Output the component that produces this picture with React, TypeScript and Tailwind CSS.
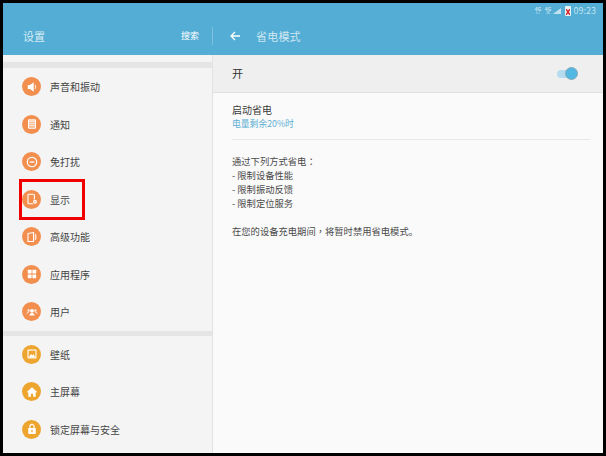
import type { ReactNode } from 'react'

const orange = 'bg-[#f28f4f]'
const amber = 'bg-[#eda52f]'

const icons: Record<string, ReactNode> = {
  sound: (
    <>
      <path d="M2.800 5h2.200L8.700 2.200v9.600L5 9H2.800z" fill="#fff" />
      <path d="M10 4.800c.8 1.200.8 3.200 0 4.400" stroke="#fff" strokeOpacity=".75" strokeWidth="1.100" fill="none" />
    </>
  ),
  notify: (
    <>
      <rect x="3" y="2.200" width="8" height="9.600" rx="1" fill="#fff" />
      <rect x="4" y="4.800" width="6" height="6" fill="#f7b78c" />
      <path d="M4 6.700h6M4 8.700h6" stroke="#fff" strokeWidth=".8" />
      <path d="M5 2.800v1.300M7 2.800v1.300M9 2.800v1.300" stroke="#f28f4f" strokeWidth=".7" />
    </>
  ),
  dnd: (
    <>
      <circle cx="7" cy="7" r="4.700" fill="none" stroke="#fff" strokeWidth="1.200" />
      <path d="M4.600 7h4.800" stroke="#fff" strokeWidth="1.300" />
    </>
  ),
  display: (
    <>
      <rect x="3" y="2.200" width="6.400" height="9.600" rx="1" fill="none" stroke="#fff" strokeWidth="1.100" />
      <circle cx="10" cy="9.800" r="2.600" fill="#f28f4f" />
      <circle cx="10" cy="9.800" r="2" fill="#fff" />
      <circle cx="10" cy="9.800" r=".7" fill="#f28f4f" />
    </>
  ),
  advanced: (
    <>
      <path d="M3 3.500 8.600 2.500v9L3 11.500z" fill="none" stroke="#fff" strokeWidth="1.100" strokeLinejoin="round" />
      <path d="M10.200 4.200c.9.800.9 4.800 0 5.600" stroke="#fff" strokeWidth="1.100" fill="none" />
    </>
  ),
  apps: (
    <>
      <rect x="2.800" y="2.800" width="3.800" height="3.800" rx=".4" fill="#fff" />
      <rect x="7.400" y="2.800" width="3.800" height="3.800" rx=".4" fill="#fff" />
      <rect x="2.800" y="7.400" width="3.800" height="3.800" rx=".4" fill="#fff" />
      <rect x="7.400" y="7.400" width="3.800" height="3.800" rx=".4" fill="#fff" />
    </>
  ),
  users: (
    <>
      <circle cx="7" cy="5.800" r="1.900" fill="#fff" />
      <path d="M4.300 10.600c.3-2 1.500-2.700 2.700-2.700s2.400.7 2.700 2.700z" fill="#fff" />
      <circle cx="3.600" cy="5.500" r="1.200" fill="#fff" fillOpacity=".8" />
      <circle cx="10.400" cy="5.500" r="1.200" fill="#fff" fillOpacity=".8" />
      <path d="M2 8.800c.2-1.200.9-1.800 1.900-1.800M12 8.800c-.2-1.200-.9-1.800-1.900-1.800" stroke="#fff" strokeWidth=".9" fill="none" />
    </>
  ),
  wallpaper: (
    <>
      <rect x="2.500" y="2.500" width="9" height="9" rx=".8" fill="#fff" />
      <rect x="3.600" y="3.600" width="6.800" height="6.800" fill="#eda52f" />
      <path d="M3.600 10.400 6 7l1.300 1.500L8.500 7l1.900 3.400z" fill="#fff" />
    </>
  ),
  home: <path d="M7 2.200 1.600 7.200h1.700v4.500h2.600V8.800h2.200v2.900h2.600V7.200h1.700z" fill="#fff" />,
  lock: (
    <>
      <path d="M4.900 6V4.500a2.100 2.100 0 0 1 4.200 0V6" fill="none" stroke="#fff" strokeWidth="1.100" />
      <rect x="3.200" y="6" width="7.600" height="6" rx=".7" fill="#fff" />
      <rect x="6.400" y="7.800" width="1.200" height="2.400" fill="#eda52f" />
    </>
  ),
}

function SettingItem({ icon, label, color = orange }: { icon: string; label: string; color?: string }) {
  return (
    <div className="flex h-[37.5px] items-center pl-[19px]">
      <div className={`flex h-[19px] w-[19px] items-center justify-center rounded-full ${color}`}>
        <svg viewBox="0 0 14 14" className="h-[14px] w-[14px]">
          {icons[icon]}
        </svg>
      </div>
      <span className="ml-[9px] text-[10px] text-[#444444]">{label}</span>
    </div>
  )
}

function NetBadge({ sub }: { sub: string }) {
  return (
    <div className="flex w-[7px] flex-col items-center text-[5px] leading-[4px] font-bold">
      <span>4G</span>
      <span className="text-[3px]">{sub}</span>
    </div>
  )
}

function StatusBar() {
  return (
    <div className="flex h-[16px] items-center justify-end pr-[7px] text-[#c3e2ef]">
      <NetBadge sub="1↓" />
      <div className="ml-[3px]">
        <NetBadge sub="2G" />
      </div>
      <svg viewBox="0 0 8 6" className="ml-[1px] h-[6px] w-[8px]">
        <path d="M0 6 8 0v6z" fill="currentColor" />
      </svg>
      <div className="relative ml-[4px] mr-[3px] h-[10px] w-[6px] rounded-[1px] bg-[#e8f3f7]">
        <svg viewBox="0 0 4 6" className="absolute bottom-[1px] left-[1px] h-[6px] w-[4px]">
          <path d="M0 0 4 6M4 0 0 6" stroke="#d62020" strokeWidth="1.400" />
        </svg>
      </div>
      <span className="text-[9px] leading-[14px]">09:23</span>
    </div>
  )
}

export default function App() {
  return (
    <div
      className="relative flex h-[456px] w-[606px] flex-col overflow-hidden border-[3px] border-black bg-black"
      style={{ fontFamily: '"Noto Sans CJK SC", "Noto Sans", sans-serif' }}
    >
      {/* Header */}
      <header className="h-[52px] shrink-0 bg-[#53add4]">
        <StatusBar />
        <div className="flex items-start text-white">
          <div className="mt-[9px] flex h-[16px] w-[209px] items-center justify-between pl-[20px] pr-[13px]">
            <span className="text-[11px] text-[#d5ebf4]">设置</span>
            <span className="text-[9px]">搜索</span>
          </div>
          <div className="mt-[8px] h-[18px] w-px bg-[#7fc1de]" />
          <div className="mt-[9px] flex h-[16px] items-center pl-[16px]">
            <svg viewBox="0 0 12 12" className="h-[12px] w-[12px]" fill="none" stroke="#fff" strokeWidth="1.300">
              <path d="M11 6H2M6 2 2 6l4 4" />
            </svg>
            <span className="ml-[15px] text-[11px] tracking-[0.2px] text-[#cfe7f2]">省电模式</span>
          </div>
        </div>
      </header>

      <div className="flex min-h-0 flex-1">
        {/* Left menu */}
        <aside className="w-[210px] shrink-0 border-r border-[#e2e2e2] bg-[#f4f4f4]">
          <div className="mt-[7px] h-[6px] bg-[#e5e5e5]" />
          <SettingItem icon="sound" label="声音和振动" />
          <SettingItem icon="notify" label="通知" />
          <SettingItem icon="dnd" label="免打扰" />
          <SettingItem icon="display" label="显示" />
          <SettingItem icon="advanced" label="高级功能" />
          <SettingItem icon="apps" label="应用程序" />
          <SettingItem icon="users" label="用户" />
          <div className="h-[5px] bg-[#e5e5e5]" />
          <SettingItem icon="wallpaper" label="壁纸" color={amber} />
          <SettingItem icon="home" label="主屏幕" color={amber} />
          <SettingItem icon="lock" label="锁定屏幕与安全" color={amber} />
        </aside>

        {/* Power saving detail */}
        <main className="flex-1 bg-[#fafafa]">
          <div className="flex h-[38px] items-center justify-between border-b border-[#e0e0e0] bg-[#efefef] pl-[19px] pr-[26px]">
            <span className="text-[11px] text-[#333333]">开</span>
            <div className="relative h-[8px] w-[20px] rounded-full bg-[#b5dcee]">
              <div className="absolute right-[-1px] top-[-2.500px] h-[13px] w-[13px] rounded-full border border-[#8aa9b8] bg-[#52b8e2]" />
            </div>
          </div>
          <div className="ml-[19px] mr-[13px] border-b border-[#e8e8e8] pb-[9px] pt-[10px]">
            <p className="text-[10px] leading-[14px] text-[#3c3c3c]">启动省电</p>
            <p className="text-[8.800px] leading-[13px] text-[#5eb0d3]">电量剩余20%时</p>
          </div>
          <div className="ml-[19px] mt-[14px] text-[9.300px] leading-[14px] text-[#4a4a4a]">
            <p>
              通过下列方式省电<span className="font-['Noto_Sans_CJK_TC']">：</span>
            </p>
            <p>- 限制设备性能</p>
            <p>- 限制振动反馈</p>
            <p>- 限制定位服务</p>
            <p className="mt-[14px]">
              在您的设备充电期间<span className="font-['Noto_Sans_CJK_TC']">，</span>将暂时禁用省电模式。
            </p>
          </div>
        </main>
      </div>

      {/* Red highlight over the display row */}
      <div className="absolute left-[16px] top-[176px] h-[41px] w-[66px] border-[3px] border-[#f00000]" />
    </div>
  )
}
